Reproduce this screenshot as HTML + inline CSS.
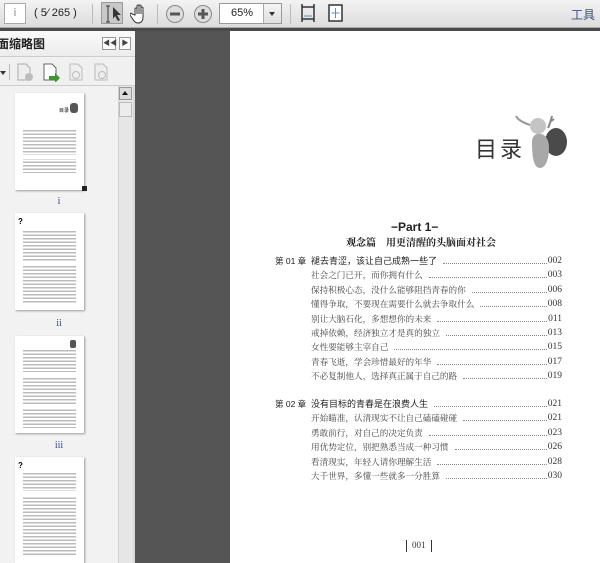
<!DOCTYPE html>
<html><head><meta charset="utf-8"><style>
*{margin:0;padding:0;box-sizing:border-box}
body{width:600px;height:563px;overflow:hidden;position:relative;background:#555;font-family:"Liberation Sans","Noto Sans CJK SC",sans-serif}
.abs{position:absolute}
#tb{left:0;top:0;width:600px;height:28px;background:linear-gradient(#f3f3f3,#dcdcdc);border-bottom:1px solid #aaa}
#line{left:0;top:28px;width:600px;height:3px;background:#4a4a4a}
.sep{position:absolute;top:4px;width:1px;height:20px;background:#bbb}
#lp{left:0;top:31px;width:135px;height:532px;background:#f2f2f2}
#lph{left:0;top:31px;width:135px;height:26px;background:linear-gradient(#fafafa,#ececec);border-bottom:1px solid #ccc;font-size:12px;font-weight:bold;color:#222;line-height:26px}
#lpt{left:0;top:58px;width:135px;height:28px;background:#f0f0f0;border-bottom:1px solid #ccc}
#sb{left:118px;top:86px;width:15px;height:477px;background:#e6e6e6;border-left:1px solid #d0d0d0}
.th{position:absolute;left:15px;width:69px;height:97px;background:#fff;box-shadow:1px 1px 2px #999}
.lab{position:absolute;left:0;width:118px;text-align:center;font-size:10px;color:#3a4a8a;font-family:"Liberation Serif",serif}
#pg{left:230px;top:31px;width:370px;height:532px;background:#fff}
.row{position:absolute;left:311px;width:251px;display:flex;align-items:flex-end;height:12px;white-space:nowrap;color:#444}
.row .t{font-family:"Liberation Serif","Noto Serif CJK SC",serif;font-size:8.6px;line-height:12px}
.row .t.ch{font-family:"Liberation Sans","Noto Sans CJK SC",sans-serif;font-size:9px;color:#222}
.row .l{flex:1;border-bottom:1px dotted #888;margin:0 1px 3px 6px}
.row .n{font-family:"Liberation Serif",serif;font-size:9.5px;line-height:12px;color:#333}
.cl{position:absolute;left:275px;font-size:8.5px;color:#222;line-height:12px;white-space:nowrap}
</style></head><body>
<div id="tb" class="abs">
 <div class="abs" style="left:4px;top:3px;width:22px;height:21px;background:#fff;border:1px solid #aaa;font-size:11px;color:#888;text-align:center;line-height:19px">i</div>
 <div class="abs" style="left:34px;top:7px;font-size:11px;color:#222">( 5⁄ 265 )</div>
 <div class="sep" style="left:92px"></div>
 <div class="abs" style="left:101px;top:2px;width:22px;height:22px;background:#c8c8c8;border:1px solid #999"></div>
 <svg class="abs" style="left:102px;top:3px" width="22" height="22"><path d="M4 3h4M6 3v16M4 19h4" stroke="#333" fill="none"/><path d="M11 4l8 8h-4l3 5-2 1-3-5-2 3z" fill="#333"/></svg>
 <svg class="abs" style="left:130px;top:3px" width="20" height="22"><path d="M5 12V6a1 1 0 0 1 2 0v5V3a1 1 0 0 1 2 0v8V3a1 1 0 0 1 2 0v8V5a1 1 0 0 1 2 0v9c0 4-2 6-5 6s-4-2-6-5l-2-3a1 1 0 0 1 2-1z" stroke="#333" fill="#fff" stroke-width="1"/></svg>
 <div class="sep" style="left:157px"></div>
 <svg class="abs" style="left:165px;top:4px" width="20" height="20"><circle cx="10" cy="10" r="8.5" fill="#ddd" stroke="#888"/><rect x="5" y="8.5" width="10" height="3" fill="#555"/></svg>
 <svg class="abs" style="left:193px;top:4px" width="20" height="20"><circle cx="10" cy="10" r="8.5" fill="#ddd" stroke="#888"/><rect x="5" y="8.5" width="10" height="3" fill="#555"/><rect x="8.5" y="5" width="3" height="10" fill="#555"/></svg>
 <div class="abs" style="left:219px;top:3px;width:63px;height:21px;background:#fff;border:1px solid #999;font-size:11px;line-height:19px;padding-left:11px;color:#222">65%</div>
 <div class="abs" style="left:263px;top:4px;width:18px;height:19px;background:linear-gradient(#f6f6f6,#ddd);border-left:1px solid #aaa"></div>
 <div class="abs" style="left:269px;top:12px;border:3px solid transparent;border-top:4px solid #333"></div>
 <div class="sep" style="left:290px"></div>
 <svg class="abs" style="left:300px;top:3px" width="16" height="20"><path d="M2 1v18M14 1v18M2 4h12M2 16h12" stroke="#333" fill="none" stroke-width="1.5"/><path d="M4 13h8" stroke="#6a8ac0"/></svg>
 <svg class="abs" style="left:328px;top:4px" width="16" height="18"><rect x="1" y="1" width="13" height="16" fill="#fff" stroke="#333" stroke-width="1.5"/><path d="M7.5 4v10M3.5 9h8" stroke="#6a8ac0"/></svg>
 <div class="abs" style="left:571px;top:6px;font-size:12px;color:#3a5080">工具</div>
</div>
<div id="line" class="abs"></div>
<div id="lp" class="abs"></div>
<div id="lph" class="abs"><span style="margin-left:-3px">面缩略图</span>
 <div class="abs" style="left:102px;top:6px;width:14px;height:13px;border:1px solid #999;background:#fafafa;font-size:7px;line-height:11px;text-align:center;color:#444">◀◀</div>
 <div class="abs" style="left:119px;top:6px;width:12px;height:13px;border:1px solid #999;background:#fafafa;font-size:7px;line-height:11px;text-align:center;color:#444">▶</div>
</div>
<div id="lpt" class="abs">
 <div class="abs" style="left:0;top:13px;border:3px solid transparent;border-top:4px solid #333"></div>
 <div class="abs" style="left:9px;top:6px;width:1px;height:16px;background:#bbb"></div>
 <svg class="abs" style="left:15px;top:4px" width="20" height="20"><path d="M3 2h8l4 4v12H3z" fill="#eee" stroke="#aaa"/><circle cx="14" cy="15" r="4" fill="#bbb"/></svg>
 <svg class="abs" style="left:41px;top:4px" width="20" height="20"><path d="M3 2h8l4 4v12H3z" fill="#fff" stroke="#666"/><path d="M8 14h6v-3l5 5-5 5v-3H8z" fill="#3a9a2a"/></svg>
 <svg class="abs" style="left:67px;top:4px" width="20" height="20"><path d="M3 2h8l4 4v12H3z" fill="#eee" stroke="#bbb"/><circle cx="9" cy="13" r="3.5" fill="none" stroke="#bbb"/></svg>
 <svg class="abs" style="left:92px;top:4px" width="20" height="20"><path d="M3 2h8l4 4v12H3z" fill="#eee" stroke="#bbb"/><circle cx="10" cy="13" r="3.5" fill="none" stroke="#bbb"/></svg>
</div>
<div id="sb" class="abs">
 <div class="abs" style="left:0;top:1px;width:13px;height:13px;background:#ddd;border:1px solid #999"></div>
 <div class="abs" style="left:3px;top:5px;border:3px solid transparent;border-bottom:4px solid #111;border-top:0"></div>
 <div class="abs" style="left:0;top:16px;width:13px;height:15px;background:#ececec;border:1px solid #bbb"></div>
</div>
<div class="abs" style="left:133px;top:86px;width:2px;height:477px;background:#d8d8d8"></div>

<div class="th" style="top:93px">
 <div class="abs" style="left:44px;top:14px;font-size:5px">目录</div><div class="abs" style="left:55px;top:10px;width:8px;height:10px;background:#555;border-radius:3px"></div>
 <div class="abs" style="left:8px;right:8px;top:35px;height:60px;background:repeating-linear-gradient(#fff 0,#fff 2px,#bbb 2px,#bbb 3.5px)"></div>
 <div class="abs" style="left:8px;right:8px;top:62px;height:4px;background:#fff"></div>
 <div class="abs" style="left:8px;right:8px;top:80px;height:17px;background:#fff"></div>
</div>
<div class="abs" style="left:82px;top:186px;width:5px;height:5px;background:#222"></div>
<div class="lab" style="top:196px">i</div>
<div class="th" style="top:213px">
 <div class="abs" style="left:3px;top:4px;font-size:8px;font-weight:bold">?</div>
 <div class="abs" style="left:8px;right:8px;top:16px;height:74px;background:repeating-linear-gradient(#fff 0,#fff 2px,#bbb 2px,#bbb 3.5px)"></div>
 <div class="abs" style="left:8px;right:8px;top:48px;height:4px;background:#fff"></div>
</div>
<div class="lab" style="top:318px">ii</div>
<div class="th" style="top:336px">
 <div class="abs" style="left:55px;top:4px;width:6px;height:8px;background:#555;border-radius:2px"></div>
 <div class="abs" style="left:8px;right:8px;top:12px;height:80px;background:repeating-linear-gradient(#fff 0,#fff 2px,#bbb 2px,#bbb 3.5px)"></div>
 <div class="abs" style="left:8px;right:8px;top:36px;height:6px;background:#fff"></div>
 <div class="abs" style="left:8px;right:8px;top:68px;height:4px;background:#fff"></div>
</div>
<div class="lab" style="top:440px">iii</div>
<div class="th" style="top:457px;height:106px">
 <div class="abs" style="left:3px;top:4px;font-size:8px;font-weight:bold">?</div>
 <div class="abs" style="left:8px;right:8px;top:14px;height:84px;background:repeating-linear-gradient(#fff 0,#fff 2px,#bbb 2px,#bbb 3.5px)"></div>
 <div class="abs" style="left:8px;right:8px;top:34px;height:6px;background:#fff"></div>
</div>

<div id="pg" class="abs"></div>
<div class="abs" style="left:475px;top:132px;font-size:22px;color:#333;letter-spacing:3px">目录</div>
<svg class="abs" style="left:514px;top:112px" width="56" height="58">
 <path d="M34 16c2-4 3-8 4-12M36 10l4-3" stroke="#888" stroke-width="2" fill="none"/>
 <path d="M2 4c2 4 8 7 14 9" stroke="#999" stroke-width="2" fill="none"/>
 <ellipse cx="42" cy="30" rx="11" ry="14" fill="#4a4a4a"/>
 <circle cx="24" cy="14" r="8" fill="#c4c4c4"/>
 <path d="M18 30c0-6 4-9 9-8s8 6 8 14c0 10-3 20-9 20s-8-10-8-26z" fill="#a8a8a8"/>
</svg>

<div class="abs" style="left:391px;top:220px;font-size:12px;font-weight:bold;color:#222">−Part 1−</div>
<div class="abs" style="left:346px;top:234px;font-weight:bold;font-size:10px;color:#222;font-family:'Liberation Serif','Noto Serif CJK SC',serif;white-space:nowrap">观念篇　用更清醒的头脑面对社会</div>

<div class="cl" style="top:255px">第 01 章</div>
<div class="row" style="top:255px"><span class="t ch">褪去青涩，该让自己成熟一些了</span><span class="l"></span><span class="n">002</span></div>
<div class="row" style="top:269px"><span class="t">社会之门已开，而你拥有什么</span><span class="l"></span><span class="n">003</span></div>
<div class="row" style="top:284px"><span class="t">保持积极心态，没什么能够阻挡青春的你</span><span class="l"></span><span class="n">006</span></div>
<div class="row" style="top:298px"><span class="t">懂得争取，不要现在需要什么就去争取什么</span><span class="l"></span><span class="n">008</span></div>
<div class="row" style="top:313px"><span class="t">别让大脑石化，多想想你的未来</span><span class="l"></span><span class="n">011</span></div>
<div class="row" style="top:327px"><span class="t">戒掉依赖，经济独立才是真的独立</span><span class="l"></span><span class="n">013</span></div>
<div class="row" style="top:341px"><span class="t">女性要能够主宰自己</span><span class="l"></span><span class="n">015</span></div>
<div class="row" style="top:356px"><span class="t">青春飞逝，学会珍惜最好的年华</span><span class="l"></span><span class="n">017</span></div>
<div class="row" style="top:370px"><span class="t">不必复制他人，选择真正属于自己的路</span><span class="l"></span><span class="n">019</span></div>

<div class="cl" style="top:398px">第 02 章</div>
<div class="row" style="top:398px"><span class="t ch">没有目标的青春是在浪费人生</span><span class="l"></span><span class="n">021</span></div>
<div class="row" style="top:412px"><span class="t">开始瞄准，认清现实不让自己磕磕碰碰</span><span class="l"></span><span class="n">021</span></div>
<div class="row" style="top:427px"><span class="t">勇敢前行，对自己的决定负责</span><span class="l"></span><span class="n">023</span></div>
<div class="row" style="top:441px"><span class="t">用优势定位，别把熟悉当成一种习惯</span><span class="l"></span><span class="n">026</span></div>
<div class="row" style="top:456px"><span class="t">看清现实，年轻人请你理解生活</span><span class="l"></span><span class="n">028</span></div>
<div class="row" style="top:470px"><span class="t">大千世界，多懂一些就多一分胜算</span><span class="l"></span><span class="n">030</span></div>

<div class="abs" style="left:406px;top:540px;width:1px;height:12px;background:#333"></div>
<div class="abs" style="left:412px;top:540px;font-size:9px;color:#333;font-family:'Liberation Serif',serif">001</div>
<div class="abs" style="left:431px;top:540px;width:1px;height:12px;background:#333"></div>
</body></html>
